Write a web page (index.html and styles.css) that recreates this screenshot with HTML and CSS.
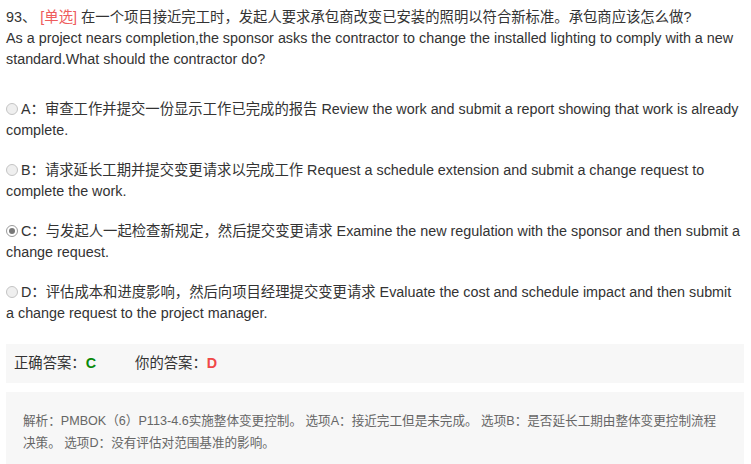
FILE: index.html
```html
<!DOCTYPE html>
<html lang="zh-CN">
<head>
<meta charset="utf-8">
<link rel="stylesheet" href="styles.css">
</head>
<body>
<div class="page">
  <div class="question">93、 <span class="tag">[单选]</span> 在一个项目接近完工时，发起人要求承包商改变已安装的照明以符合新标准。承包商应该怎么做?<br>As a project nears completion,the sponsor asks the contractor to change the installed lighting to comply with a new standard.What should the contractor do?</div>
  <div class="options">
    <div class="option"><span class="radio"></span>A：审查工作并提交一份显示工作已完成的报告 Review the work and submit a report showing that work is already complete.</div>
    <div class="option"><span class="radio"></span>B：请求延长工期并提交变更请求以完成工作 Request a schedule extension and submit a change request to complete the work.</div>
    <div class="option"><span class="radio checked"></span>C：与发起人一起检查新规定，然后提交变更请求 Examine the new regulation with the sponsor and then submit a change request.</div>
    <div class="option"><span class="radio"></span>D：评估成本和进度影响，然后向项目经理提交变更请求 Evaluate the cost and schedule impact and then submit a change request to the project manager.</div>
  </div>
  <div class="answer">
    <span>正确答案：<b class="right">C</b></span>
    <span class="yours">你的答案：<b class="wrong">D</b></span>
  </div>
  <div class="analysis">解析：PMBOK（6）P113-4.6实施整体变更控制。 选项A：接近完工但是未完成。 选项B：是否延长工期由整体变更控制流程决策。 选项D：没有评估对范围基准的影响。</div>
</div>
</body>
</html>
```
FILE: styles.css
```css
html, body {
  margin: 0;
  padding: 0;
  background: #fff;
}
.page {
  padding: 7px 7px 0 6px;
  font-family: "Liberation Sans", Arial, "Noto Sans CJK SC", sans-serif;
  font-size: 14.35px;
  line-height: 21px;
  color: #333;
}
.tag {
  color: #ee5c5c;
}
.options {
  margin-top: 29px;
  padding-right: 2px;
  display: flex;
  flex-direction: column;
  gap: 19px;
}
.radio {
  display: inline-block;
  width: 10px;
  height: 10px;
  border: 1px solid #c4c4c4;
  border-radius: 50%;
  background: #efefef;
  margin-right: 3px;
  vertical-align: -1px;
  position: relative;
  box-sizing: content-box;
}
.radio.checked {
  border-color: #9a9a9a;
  background: #fff;
}
.radio.checked::after {
  content: "";
  position: absolute;
  left: 2px;
  top: 2px;
  width: 6px;
  height: 6px;
  border-radius: 50%;
  background: #777;
}
.answer {
  margin-top: 20px;
  background: #f7f7f7;
  height: 39px;
  display: flex;
  align-items: center;
  padding-left: 8px;
}
.answer b {
  font-family: "Liberation Sans", Arial, sans-serif;
}
.right {
  color: #0a8a0a;
}
.wrong {
  color: #f04848;
}
.yours {
  margin-left: 39px;
}
.analysis {
  margin-top: 9px;
  background: #f7f7f7;
  padding: 18px 19px 30px 17px;
  font-size: 12.6px;
  line-height: 22px;
  color: #666;
}
```
